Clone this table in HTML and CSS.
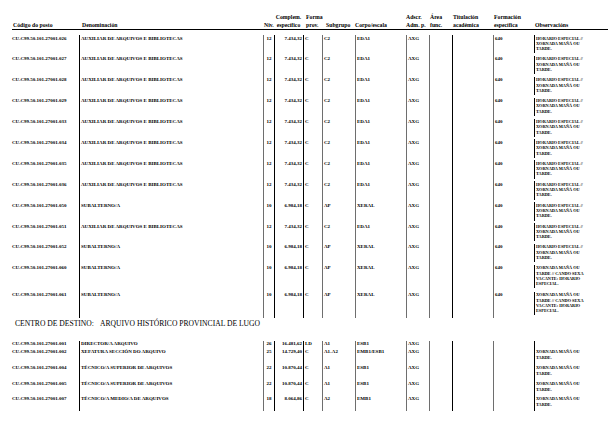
FILE: index.html
```html
<!DOCTYPE html>
<html lang="gl">
<head>
<meta charset="utf-8">
<title>Relación de postos</title>
<link rel="stylesheet" href="styles.css">
</head>
<body>
<div class="page">
  <div class="grid head">
    <div class="hc">Código do posto</div>
    <div class="hd">Denominación</div>
    <div class="hc">Niv.</div>
    <div class="hm">Complem.<br>específico</div>
    <div class="hf">Forma<br>prov.</div>
    <div class="hs">Subgrupo</div>
    <div class="h0">Corpo/escala</div>
    <div class="h0">Adscr.<br>Adm. p.</div>
    <div class="hc">Área<br>func.</div>
    <div class="hc">Titulación<br>académica</div>
    <div class="hc">Formación<br>específica</div>
    <div class="hc">Observacións</div>
  </div>

  <div class="sec">
    <div class="grid row r1">
      <div>CU.C99.50.101.27001.026</div><div class="b">AUXILIAR DE ARQUIVOS E BIBLIOTECAS</div><div class="g n">12</div><div class="b r">7.434,32</div><div class="b">C</div><div class="g">C2</div><div class="g">EDA1</div><div class="g">AXG</div><div class="g"></div><div class="b"></div><div class="g">640</div>
      <div class="obs"><div class="ot">HORARIO ESPECIAL //<br>XORNADA MAÑÁ OU<br>TARDE.</div></div>
    </div>
    <div class="grid row r1">
      <div>CU.C99.50.101.27001.027</div><div class="b">AUXILIAR DE ARQUIVOS E BIBLIOTECAS</div><div class="g n">12</div><div class="b r">7.434,32</div><div class="b">C</div><div class="g">C2</div><div class="g">EDA1</div><div class="g">AXG</div><div class="g"></div><div class="b"></div><div class="g">640</div>
      <div class="obs"><div class="ot">HORARIO ESPECIAL //<br>XORNADA MAÑÁ OU<br>TARDE.</div></div>
    </div>
    <div class="grid row r1">
      <div>CU.C99.50.101.27001.028</div><div class="b">AUXILIAR DE ARQUIVOS E BIBLIOTECAS</div><div class="g n">12</div><div class="b r">7.434,32</div><div class="b">C</div><div class="g">C2</div><div class="g">EDA1</div><div class="g">AXG</div><div class="g"></div><div class="b"></div><div class="g">640</div>
      <div class="obs"><div class="ot">HORARIO ESPECIAL //<br>XORNADA MAÑÁ OU<br>TARDE.</div></div>
    </div>
    <div class="grid row r1">
      <div>CU.C99.50.101.27001.029</div><div class="b">AUXILIAR DE ARQUIVOS E BIBLIOTECAS</div><div class="g n">12</div><div class="b r">7.434,32</div><div class="b">C</div><div class="g">C2</div><div class="g">EDA1</div><div class="g">AXG</div><div class="g"></div><div class="b"></div><div class="g">640</div>
      <div class="obs"><div class="ot">HORARIO ESPECIAL //<br>XORNADA MAÑÁ OU<br>TARDE.</div></div>
    </div>
    <div class="grid row r1">
      <div>CU.C99.50.101.27001.033</div><div class="b">AUXILIAR DE ARQUIVOS E BIBLIOTECAS</div><div class="g n">12</div><div class="b r">7.434,32</div><div class="b">C</div><div class="g">C2</div><div class="g">EDA1</div><div class="g">AXG</div><div class="g"></div><div class="b"></div><div class="g">640</div>
      <div class="obs"><div class="ot">HORARIO ESPECIAL //<br>XORNADA MAÑÁ OU<br>TARDE.</div></div>
    </div>
    <div class="grid row r1">
      <div>CU.C99.50.101.27001.034</div><div class="b">AUXILIAR DE ARQUIVOS E BIBLIOTECAS</div><div class="g n">12</div><div class="b r">7.434,32</div><div class="b">C</div><div class="g">C2</div><div class="g">EDA1</div><div class="g">AXG</div><div class="g"></div><div class="b"></div><div class="g">640</div>
      <div class="obs"><div class="ot">HORARIO ESPECIAL //<br>XORNADA MAÑÁ OU<br>TARDE.</div></div>
    </div>
    <div class="grid row r1">
      <div>CU.C99.50.101.27001.035</div><div class="b">AUXILIAR DE ARQUIVOS E BIBLIOTECAS</div><div class="g n">12</div><div class="b r">7.434,32</div><div class="b">C</div><div class="g">C2</div><div class="g">EDA1</div><div class="g">AXG</div><div class="g"></div><div class="b"></div><div class="g">640</div>
      <div class="obs"><div class="ot">HORARIO ESPECIAL //<br>XORNADA MAÑÁ OU<br>TARDE.</div></div>
    </div>
    <div class="grid row r1">
      <div>CU.C99.50.101.27001.036</div><div class="b">AUXILIAR DE ARQUIVOS E BIBLIOTECAS</div><div class="g n">12</div><div class="b r">7.434,32</div><div class="b">C</div><div class="g">C2</div><div class="g">EDA1</div><div class="g">AXG</div><div class="g"></div><div class="b"></div><div class="g">640</div>
      <div class="obs"><div class="ot">HORARIO ESPECIAL //<br>XORNADA MAÑÁ OU<br>TARDE.</div></div>
    </div>
    <div class="grid row r1">
      <div>CU.C99.50.101.27001.050</div><div class="b">SUBALTERNO/A</div><div class="g n">10</div><div class="b r">6.984,18</div><div class="b">C</div><div class="g">AP</div><div class="g">XERAL</div><div class="g">AXG</div><div class="g"></div><div class="b"></div><div class="g">640</div>
      <div class="obs"><div class="ot">HORARIO ESPECIAL //<br>XORNADA MAÑÁ OU<br>TARDE.</div></div>
    </div>
    <div class="grid row r1">
      <div>CU.C99.50.101.27001.051</div><div class="b">AUXILIAR DE ARQUIVOS E BIBLIOTECAS</div><div class="g n">12</div><div class="b r">7.434,32</div><div class="b">C</div><div class="g">C2</div><div class="g">EDA1</div><div class="g">AXG</div><div class="g"></div><div class="b"></div><div class="g">640</div>
      <div class="obs"><div class="ot">HORARIO ESPECIAL //<br>XORNADA MAÑÁ OU<br>TARDE.</div></div>
    </div>
    <div class="grid row r1">
      <div>CU.C99.50.101.27001.052</div><div class="b">SUBALTERNO/A</div><div class="g n">10</div><div class="b r">6.984,18</div><div class="b">C</div><div class="g">AP</div><div class="g">XERAL</div><div class="g">AXG</div><div class="g"></div><div class="b"></div><div class="g">640</div>
      <div class="obs"><div class="ot">HORARIO ESPECIAL //<br>XORNADA MAÑÁ OU<br>TARDE.</div></div>
    </div>
    <div class="grid row r5">
      <div>CU.C99.50.101.27001.060</div><div class="b">SUBALTERNO/A</div><div class="g n">10</div><div class="b r">6.984,18</div><div class="b">C</div><div class="g">AP</div><div class="g">XERAL</div><div class="g">AXG</div><div class="g"></div><div class="b"></div><div class="g">640</div>
      <div class="obs"><div class="ot">XORNADA MAÑÁ OU<br>TARDE // CANDO SEXA<br>VACANTE: HORARIO<br>ESPECIAL.</div></div>
    </div>
    <div class="grid row r5b">
      <div>CU.C99.50.101.27001.061</div><div class="b">SUBALTERNO/A</div><div class="g n">10</div><div class="b r">6.984,18</div><div class="b">C</div><div class="g">AP</div><div class="g">XERAL</div><div class="g">AXG</div><div class="g"></div><div class="b"></div><div class="g">640</div>
      <div class="obs"><div class="ot">XORNADA MAÑÁ OU<br>TARDE // CANDO SEXA<br>VACANTE: HORARIO<br>ESPECIAL.</div></div>
    </div>
  </div>

  <div class="centro"><span class="centro-lbl">CENTRO DE DESTINO:</span><span>ARQUIVO HISTÓRICO PROVINCIAL DE LUGO</span></div>

  <div class="sec sec2">
    <div class="grid row s1">
      <div>CU.C99.50.101.27001.001</div><div class="b">DIRECTOR/A ARQUIVO</div><div class="g n">26</div><div class="b r">16.481,62</div><div class="b">LD</div><div class="g">A1</div><div class="g">ESB1</div><div class="g">AXG</div><div class="g"></div><div class="b"></div><div class="g"></div>
      <div class="obs"><div class="ot"></div></div>
    </div>
    <div class="grid row s2">
      <div>CU.C99.50.101.27001.002</div><div class="b">XEFATURA SECCIÓN DO ARQUIVO</div><div class="g n">25</div><div class="b r">14.729,40</div><div class="b">C</div><div class="g">A1-A2</div><div class="g">EMB1/ESB1</div><div class="g">AXG</div><div class="g"></div><div class="b"></div><div class="g"></div>
      <div class="obs"><div class="ot">XORNADA MAÑÁ OU<br>TARDE.</div></div>
    </div>
    <div class="grid row s2">
      <div>CU.C99.50.101.27001.004</div><div class="b">TÉCNICO/A SUPERIOR DE ARQUIVOS</div><div class="g n">22</div><div class="b r">10.870,44</div><div class="b">C</div><div class="g">A1</div><div class="g">ESB1</div><div class="g">AXG</div><div class="g"></div><div class="b"></div><div class="g"></div>
      <div class="obs"><div class="ot">XORNADA MAÑÁ OU<br>TARDE.</div></div>
    </div>
    <div class="grid row s3">
      <div>CU.C99.50.101.27001.005</div><div class="b">TÉCNICO/A SUPERIOR DE ARQUIVOS</div><div class="g n">22</div><div class="b r">10.870,44</div><div class="b">C</div><div class="g">A1</div><div class="g">ESB1</div><div class="g">AXG</div><div class="g"></div><div class="b"></div><div class="g"></div>
      <div class="obs"><div class="ot">XORNADA MAÑÁ OU<br>TARDE.</div></div>
    </div>
    <div class="grid row s3">
      <div>CU.C99.50.101.27001.007</div><div class="b">TÉCNICO/A MEDIO/A DE ARQUIVOS</div><div class="g n">18</div><div class="b r">8.064,86</div><div class="b">C</div><div class="g">A2</div><div class="g">EMB1</div><div class="g">AXG</div><div class="g"></div><div class="b"></div><div class="g"></div>
      <div class="obs"><div class="ot">XORNADA MAÑÁ OU<br>TARDE.</div></div>
    </div>
  </div>
</div>
</body>
</html>
```

FILE: styles.css
```css
* {
  box-sizing: border-box;
  margin: 0;
  padding: 0;
}

html, body {
  background: #fff;
}

body {
  margin: 0;
  font-family: "Liberation Serif", "Times New Roman", serif;
  font-weight: bold;
  color: #000;
}

.page {
  width: 615px;
  height: 439px;
  padding: 13px 7px 0 12px;
  overflow: hidden;
}

.grid {
  display: grid;
  grid-template-columns: 67px 184px 11px 29px 19px 33px 51px 23px 23px 41px 41px 74px;
  width: 596px;
}

/* header */
.head {
  align-items: end;
  border-bottom: 1px solid #000;
  font-size: 5.75px;
  line-height: 8px;
}

.head > div {
  white-space: nowrap;
}

.hc { padding-left: 1px; }
.hd { padding-left: 3px; }
.hm { text-align: center; }
.hf { padding-left: 3px; }
.hs { padding-left: 4px; }
.h0 { padding-left: 0; }

/* rows */
.sec {
  margin-top: 5px;
}

.row {
  font-size: 5px;
  line-height: 5px;
}

.row > div {
  padding-top: 0.5px;
  padding-left: 1px;
  white-space: nowrap;
}

.row > div:first-child {
  padding-left: 0;
}

.row > .b {
  border-left: 1px solid #000;
}

.row > .g {
  border-left: 1px solid #6e6e6e;
}

.row > .n {
  text-align: center;
  padding-left: 0;
}

.row > .r {
  text-align: right;
  padding-right: 1px;
}

.r1 { height: 20.9px; }
.r5 { height: 27px; }
.r5b { height: 26px; }
.s1 { height: 8px; }
.s2 { height: 16px; }
.s3 { height: 15px; }

.row > .obs {
  padding-left: 0;
  padding-top: 0;
}

.ot {
  border-left: 1px solid #000;
  padding: 0.5px 0 2px 1px;
  font-size: 4.3px;
  line-height: 5.3px;
}

.sec2 {
  margin-top: 0;
}

.sec2 .row > .obs {
  border-left: 1px solid #000;
}

.sec2 .ot {
  border-left: none;
  padding-left: 1px;
  padding-bottom: 0;
}

/* section title */
.centro {
  font-weight: normal;
  font-size: 7.6px;
  line-height: 8px;
  margin: 2px 0 13px 3px;
  white-space: nowrap;
}

.centro-lbl {
  display: inline-block;
  width: 85px;
}
```
